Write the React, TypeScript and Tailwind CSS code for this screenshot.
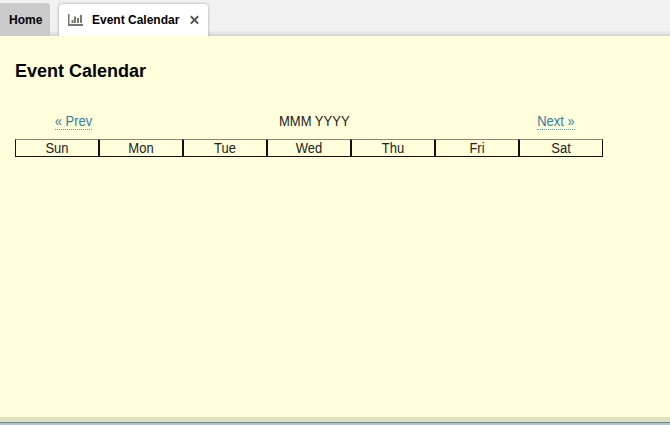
const days = ['Sun', 'Mon', 'Tue', 'Wed', 'Thu', 'Fri', 'Sat'];

function ChartIcon() {
  return (
    <svg width="16" height="12" viewBox="0 0 16 12" fill="#777773">
      <path d="M0 0h1.500v10H15v2H0z" />
      <path d="M3.500 6h2v3h-2zM6 2.500h2V9H6zM9 4h2v5H9zM12 1h2v8h-2z" />
    </svg>
  );
}

function CloseIcon() {
  return (
    <svg width="9" height="10" viewBox="0 0 9 10" stroke="#555" strokeWidth="2">
      <path d="M0.800 1.200l7.400 7.400M8.200 1.200l-7.400 7.400" />
    </svg>
  );
}

export default function App() {
  return (
    <div className="flex h-[425px] w-[670px] flex-col overflow-hidden bg-[#ffffdc] font-['Liberation_Sans',Arial,sans-serif] text-black">
      <header className="flex h-9 shrink-0 items-end bg-linear-to-b from-[#f1f1f1] from-85% to-[#d4d4d4]">
        <div className="flex h-[33px] w-[50px] items-center rounded-tr-[3px] bg-[#cbcbcb] pl-[9px] text-[12px] font-bold">Home</div>
        <div className="ml-[9px] flex h-8 w-[149px] items-center rounded-t-[4px] bg-white pb-px pl-[9px] text-[12px] font-bold shadow-[0_0_3px_rgba(0,0,0,0.35)]">
          <ChartIcon />
          <span className="ml-2 w-[98px] whitespace-nowrap">Event Calendar</span>
          <CloseIcon />
        </div>
      </header>
      <main className="relative flex-1 bg-[#ffffdc] pl-[15px]">
        <h1 className="pt-[24px] text-[18px] leading-[22px] font-bold">Event Calendar</h1>
        <nav className="mt-[30px] flex h-[27px] w-[588px] items-start text-[13px] leading-[15px] text-[#222]">
          <div className="flex w-[117px] justify-center">
            <a className="border-b border-dotted border-[#5f9aae] pt-[2px] text-[#317c9c]">
              <span className="block scale-y-110">« Prev</span>
            </a>
          </div>
          <div className="flex-1 pt-[2px] pl-[147px]">
            <span className="block scale-y-110">MMM YYYY</span>
          </div>
          <div className="flex w-[94px] justify-center">
            <a className="border-b border-dotted border-[#5f9aae] pt-[2px] text-[#317c9c]">
              <span className="block scale-y-110">Next »</span>
            </a>
          </div>
        </nav>
        <div className="grid w-[588px] grid-cols-7 text-center text-[13px] leading-[17px] text-[#222]">
          {days.map((day) => (
            <div key={day} className="h-[18px] border border-t-[#88887a] border-r-[#111] border-b-[#111] border-l-[#111]">
              <span className="block scale-y-110">{day}</span>
            </div>
          ))}
        </div>
      </main>
      <footer className="shrink-0">
        <div className="h-[5px] bg-[#dedec3]" />
        <div className="h-px bg-[#7d8884]" />
        <div className="h-[2px] bg-[#afc3cc]" />
      </footer>
    </div>
  );
}
